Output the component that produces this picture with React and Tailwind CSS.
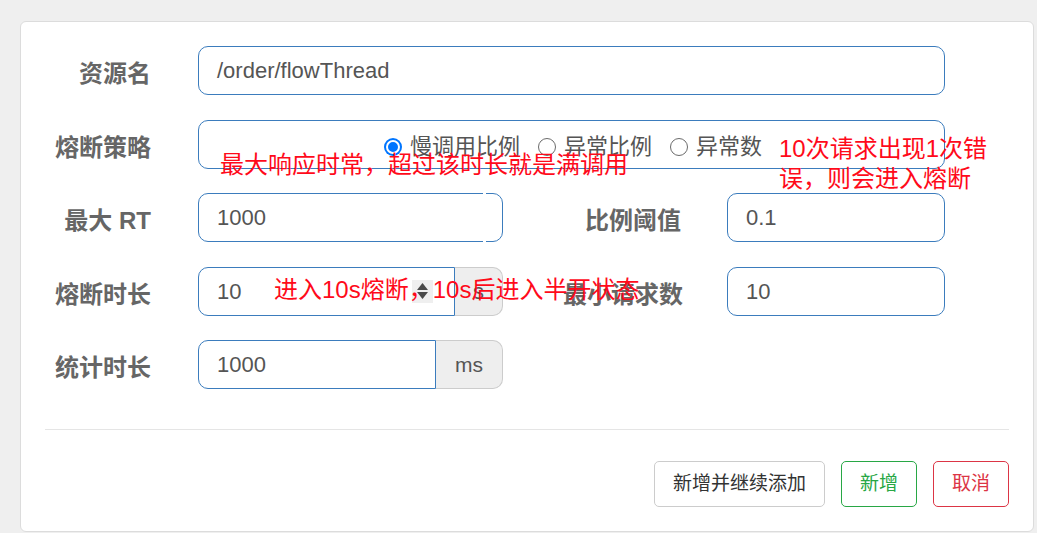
import React from "react";

const FONT = { fontFamily: '"Liberation Sans", "Noto Sans CJK SC", sans-serif' };

function Label({ children, className = "" }) {
  return (
    <div className={`shrink-0 text-right text-[24px] font-bold text-[#666] leading-[26px] pt-[7px] ${className}`}>
      {children}
    </div>
  );
}

function Radio({ checked, label }) {
  return (
    <div className="flex items-center gap-[8px]">
      {checked ? (
        <span className="shrink-0 w-[18px] h-[18px] rounded-full bg-[#0075ff] flex items-center justify-center">
          <span className="w-[10px] h-[10px] rounded-full bg-[#0075ff] border-[2px] border-white box-content"></span>
        </span>
      ) : (
        <span className="shrink-0 w-[18px] h-[18px] rounded-full border-[1.5px] border-[#6b6b6b] bg-white"></span>
      )}
      <span className="text-[22px] text-[#555] leading-[26px]">{label}</span>
    </div>
  );
}

function TextBox({ value, className = "" }) {
  return (
    <div className={`h-[49px] border border-[#3b7cbd] rounded-[10px] bg-white flex items-center pl-[18px] text-[22px] text-[#555] ${className}`}>
      {value}
    </div>
  );
}

export default function App() {
  return (
    <div className="w-[1037px] h-[533px] bg-[#efefef] pt-[21px] pl-[20px] overflow-hidden" style={FONT}>
      <div className="relative w-[1014px] h-[511px] bg-white border border-[#dcdcdc] rounded-[6px] pt-[24px]">
        <div className="flex flex-col gap-[24.5px]">
          {/* Row 1 */}
          <div className="flex items-center h-[49px]">
            <Label className="w-[130px]">资源名</Label>
            <TextBox value="/order/flowThread" className="ml-[47px] w-[747px]" />
          </div>
          {/* Row 2 */}
          <div className="flex items-center h-[49px]">
            <Label className="w-[130px]">熔断策略</Label>
            <div className="ml-[47px] w-[747px] h-[49px] border border-[#3b7cbd] rounded-[10px] bg-white flex items-center pl-[185px] pt-[6px]">
              <div className="flex items-center gap-[18px]">
                <Radio checked label="慢调用比例" />
                <Radio label="异常比例" />
                <Radio label="异常数" />
              </div>
            </div>
          </div>
          {/* Row 3 */}
          <div className="flex items-center h-[49px]">
            <Label className="w-[130px]">最大 RT</Label>
            <div className="relative ml-[47px] w-[305px]">
              <TextBox value="1000" className="w-[305px]" />
              <span className="absolute top-0 left-[285px] w-[3px] h-[49px] bg-white"></span>
            </div>
            <Label className="w-[178px]">比例阈值</Label>
            <TextBox value="0.1" className="ml-[46px] w-[218px]" />
          </div>
          {/* Row 4 */}
          <div className="flex items-center h-[49px]">
            <Label className="w-[130px]">熔断时长</Label>
            <div className="ml-[47px] w-[305px] flex h-[49px]">
              <div className="relative w-[257px] h-[49px] border border-[#3b7cbd] rounded-l-[10px] bg-white flex items-center pl-[18px] text-[22px] text-[#555]">
                10
                <div className="absolute right-[21px] top-[12px] w-[21px] h-[23px] bg-[#efefef] flex flex-col items-center justify-center gap-[2px]">
                  <svg width="11" height="7" viewBox="0 0 11 7"><path d="M5.5 0 L11 7 L0 7 Z" fill="#4a4a4a" /></svg>
                  <svg width="11" height="7" viewBox="0 0 11 7"><path d="M0 0 L11 0 L5.5 7 Z" fill="#4a4a4a" /></svg>
                </div>
              </div>
              <div className="w-[48px] h-[49px] border border-l-0 border-[#ccc] rounded-r-[10px] bg-[#eee] flex items-center justify-center text-[22px] text-[#555]">
                s
              </div>
            </div>
            <Label className="w-[180px]">最小请求数</Label>
            <TextBox value="10" className="ml-[44px] w-[218px]" />
          </div>
          {/* Row 5 */}
          <div className="flex items-center h-[49px]">
            <Label className="w-[130px]">统计时长</Label>
            <div className="ml-[47px] w-[305px] flex h-[49px]">
              <div className="w-[238px] h-[49px] border border-[#3b7cbd] rounded-l-[10px] bg-white flex items-center pl-[18px] text-[22px] text-[#555]">
                1000
              </div>
              <div className="w-[67px] h-[49px] border border-l-0 border-[#ccc] rounded-r-[10px] bg-[#eee] flex items-center justify-center text-[21px] text-[#555]">
                ms
              </div>
            </div>
          </div>
        </div>

        <div className="mx-[24px] mt-[40px] border-t border-[#e5e5e5]"></div>

        <div className="flex justify-end gap-[16px] mr-[24px] mt-[31px]">
          <button className="w-[171px] h-[46px] border border-[#ccc] rounded-[5px] bg-white text-[19px] text-[#333]">
            新增并继续添加
          </button>
          <button className="w-[76px] h-[46px] border border-[#28a745] rounded-[5px] bg-white text-[19px] text-[#28a745]">
            新增
          </button>
          <button className="w-[76px] h-[46px] border border-[#dc3545] rounded-[5px] bg-white text-[19px] text-[#dc3545]">
            取消
          </button>
        </div>

        {/* Red annotations overlaid */}
        <div className="absolute left-[199px] top-[127px] text-[24px] leading-[31px] text-[#ff0a1a] whitespace-nowrap">
          最大响应时常，超过该时长就是满调用
        </div>
        <div className="absolute left-[758px] top-[112px] text-[24px] leading-[30px] text-[#ff0a1a] whitespace-nowrap">
          10次请求出现1次错
          <br />
          误，则会进入熔断
        </div>
        <div className="absolute left-[253px] top-[252px] text-[24px] leading-[31px] text-[#ff0a1a] whitespace-nowrap">
          进入10s熔断，10s后进入半开状态
        </div>
      </div>
    </div>
  );
}
